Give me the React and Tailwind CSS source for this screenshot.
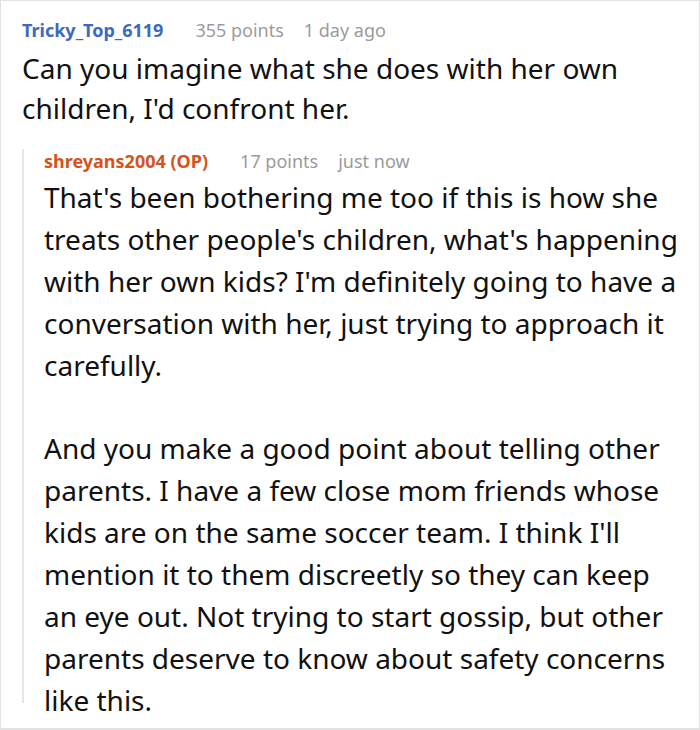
import React from 'react';

const font = { fontFamily: '"Noto Sans", "Open Sans", sans-serif' };

function Meta({ name, nameClass, points, time, className = '' }) {
  return (
    <div className={`flex items-baseline text-[18px] leading-[24px] whitespace-nowrap ${className}`}>
      <span className={`font-bold ${nameClass}`}>{name}</span>
      <span className="ml-8 text-[#9b9b9b]">{points}</span>
      <span className="ml-5 text-[#9b9b9b]">{time}</span>
    </div>
  );
}

function Lines({ lines, className = '' }) {
  return (
    <p className={`text-[28px] whitespace-nowrap ${className}`}>
      {lines.map((l, i) => (
        <React.Fragment key={i}>
          {l}
          {i < lines.length - 1 && <br />}
        </React.Fragment>
      ))}
    </p>
  );
}

export default function App() {
  return (
    <div
      className="w-[700px] h-[730px] bg-white border border-b-2 border-[#e2e2e2] overflow-hidden text-[#111]"
      style={font}
    >
      <div className="pl-[21px] pt-[17px]">
        <Meta name="Tricky_Top_6119" nameClass="text-[#3b6ac0]" points="355 points" time="1 day ago" />
        <Lines
          className="leading-[40px] mt-[6px]"
          lines={['Can you imagine what she does with her own', "children, I'd confront her."]}
        />

        <div className="mt-[31px] h-[554px] border-l-2 border-[#e6e6e6] pl-[20px]">
          <Meta
            className="-mt-[10px]"
            name="shreyans2004 (OP)"
            nameClass="text-[#d5531c]"
            points="17 points"
            time="just now"
          />
          <Lines
            className="leading-[42px] mt-[3px]"
            lines={[
              "That's been bothering me too if this is how she",
              "treats other people's children, what's happening",
              "with her own kids? I'm definitely going to have a",
              'conversation with her, just trying to approach it',
              'carefully.',
            ]}
          />
          <Lines
            className="leading-[42px] mt-[41px]"
            lines={[
              'And you make a good point about telling other',
              'parents. I have a few close mom friends whose',
              "kids are on the same soccer team. I think I'll",
              'mention it to them discreetly so they can keep',
              'an eye out. Not trying to start gossip, but other',
              'parents deserve to know about safety concerns',
              'like this.',
            ]}
          />
        </div>
      </div>
    </div>
  );
}
